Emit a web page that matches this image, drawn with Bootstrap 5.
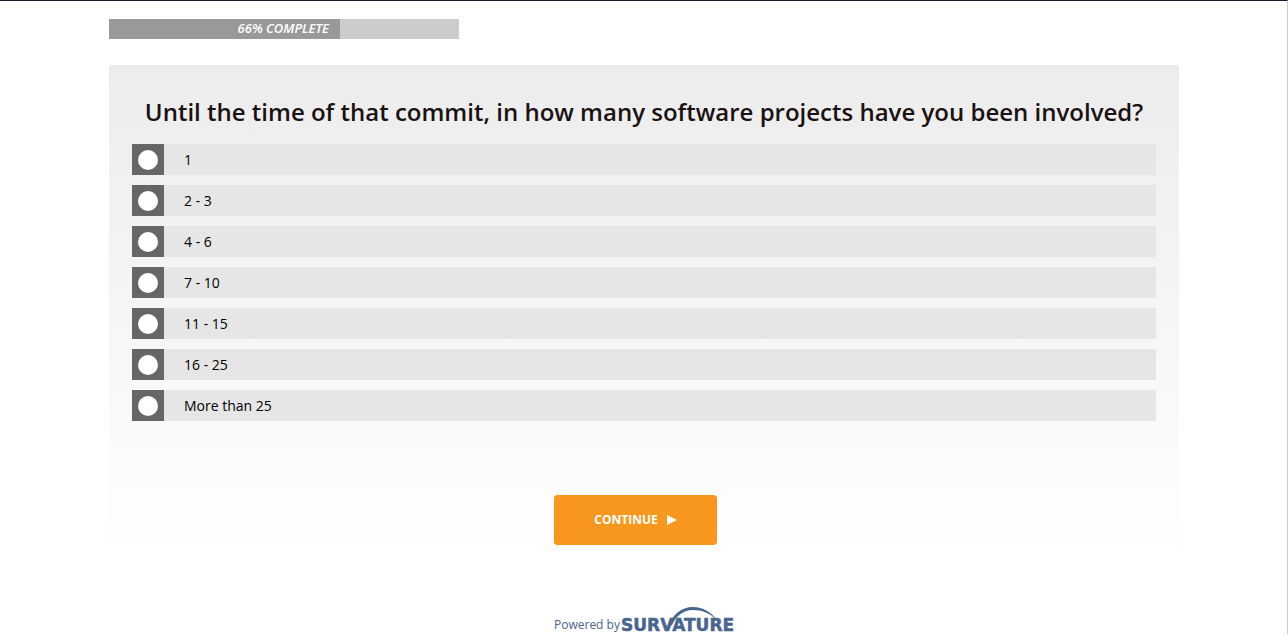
<!DOCTYPE html>
<html lang="en">
<head>
<meta charset="utf-8">
<meta name="viewport" content="width=device-width, initial-scale=1">
<title>Survey</title>
<link href="https://cdn.jsdelivr.net/npm/bootstrap@5.3.0/dist/css/bootstrap.min.css" rel="stylesheet">
<style>
  body { font-family: "Open Sans", "Noto Sans", sans-serif; font-size: 14px; line-height: 21px; color: #000; background: #fff; border-top: 1px solid #1a1a2e; border-right: 1px solid #ccc; }
  .survey { max-width: 1071px; padding: 18px 0 0 1px; }
  .survey-progress { max-width: 350px; height: 20px; border-radius: 0; background: #ccc; }
  .survey-progress .progress-bar { background: #999; font-size: 13px; line-height: 18px; justify-content: flex-start; font-weight: 600; font-style: italic; text-align: right; padding-right: 11px; }
  .question { margin-top: 26px; padding: 30px 23px 19px; background: linear-gradient(#ececec, #fff); }
  .question legend { font-size: 24px; line-height: 34px; font-weight: 600; color: #1a1212; margin-bottom: 15px; }
  .options { gap: 10px; }
  .option { background: #e6e6e6; min-height: 31px; }
  .option .mark-box { width: 32px; background: #666; }
  .option .form-check-input { width: 20px; height: 20px; border: 0; margin: 0; background-color: #fff; }
  .option .form-check-input:checked { background-color: #f8971d; }
  .option-text { padding-left: 20px; }
  .center-col { width: 180px; }
  .actions { padding-top: 74px; }
  .btn-continue { width: 163px; height: 50px; border-radius: 3px; font-size: 12px; font-weight: 700; gap: 9px; --bs-btn-color: #fff; --bs-btn-bg: #f8971d; --bs-btn-border-color: #f8971d; --bs-btn-hover-color: #fff; --bs-btn-hover-bg: #e58612; --bs-btn-hover-border-color: #e58612; }
  .powered { margin-top: 42px; font-size: 12px; color: #47658f; gap: 2px; }
  .powered span { line-height: 18px; }
  .wordmark { font-family: "DejaVu Sans", sans-serif; font-weight: 700; font-size: 17px; stroke: #47658f; stroke-width: 0.5px; }
</style>
</head>
<body>
<main class="container-fluid survey">
  <div class="progress survey-progress" role="progressbar" aria-label="Survey progress" aria-valuenow="66" aria-valuemin="0" aria-valuemax="100">
    <div class="progress-bar" style="width: 66%">66% COMPLETE</div>
  </div>
  <form class="question">
    <fieldset>
      <legend class="text-center">Until the time of that commit, in how many software projects have you been involved?</legend>
      <div class="options d-flex flex-column">
        <label class="option d-flex align-items-stretch" for="o1"><span class="mark-box d-flex align-items-center justify-content-center"><input class="form-check-input" type="radio" name="projects" id="o1"></span><span class="option-text align-self-center">1</span></label>
        <label class="option d-flex align-items-stretch" for="o2"><span class="mark-box d-flex align-items-center justify-content-center"><input class="form-check-input" type="radio" name="projects" id="o2"></span><span class="option-text align-self-center">2 - 3</span></label>
        <label class="option d-flex align-items-stretch" for="o3"><span class="mark-box d-flex align-items-center justify-content-center"><input class="form-check-input" type="radio" name="projects" id="o3"></span><span class="option-text align-self-center">4 - 6</span></label>
        <label class="option d-flex align-items-stretch" for="o4"><span class="mark-box d-flex align-items-center justify-content-center"><input class="form-check-input" type="radio" name="projects" id="o4"></span><span class="option-text align-self-center">7 - 10</span></label>
        <label class="option d-flex align-items-stretch" for="o5"><span class="mark-box d-flex align-items-center justify-content-center"><input class="form-check-input" type="radio" name="projects" id="o5"></span><span class="option-text align-self-center">11 - 15</span></label>
        <label class="option d-flex align-items-stretch" for="o6"><span class="mark-box d-flex align-items-center justify-content-center"><input class="form-check-input" type="radio" name="projects" id="o6"></span><span class="option-text align-self-center">16 - 25</span></label>
        <label class="option d-flex align-items-stretch" for="o7"><span class="mark-box d-flex align-items-center justify-content-center"><input class="form-check-input" type="radio" name="projects" id="o7"></span><span class="option-text align-self-center">More than 25</span></label>
      </div>
    </fieldset>
    <div class="actions center-col mx-auto">
      <button type="submit" class="btn btn-continue d-flex align-items-center justify-content-center">CONTINUE
        <svg width="10" height="10" viewBox="0 0 10 10" aria-hidden="true"><path d="M0 0L10 5L0 10Z" fill="#fff"/></svg>
      </button>
    </div>
  </form>
  <footer class="powered center-col mx-auto d-flex align-items-end">
    <span class="text-nowrap">Powered by</span>
    <svg class="flex-shrink-0 overflow-visible" width="112" height="28" viewBox="0 0 112 28" role="img" aria-label="Survature" fill="#47658f">
      <text class="wordmark" x="-1" y="25">SURVATURE</text>
      <path d="M46 21C50 9 59 1 71 1C81 1 89 6 94 13C87 7 80 4 71 4C60 4 54 11 50 19Z"/>
    </svg>
  </footer>
</main>
<script src="https://cdn.jsdelivr.net/npm/bootstrap@5.3.0/dist/js/bootstrap.bundle.min.js"></script>
</body>
</html>
